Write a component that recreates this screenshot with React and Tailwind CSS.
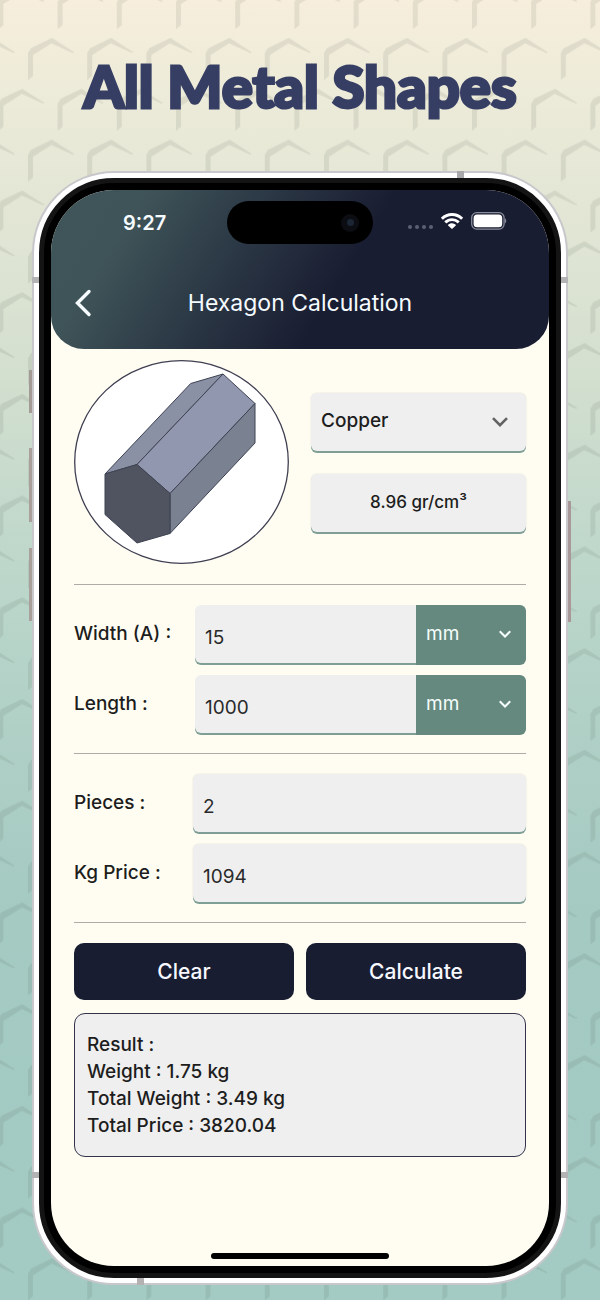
import React, { useState } from "react";

const DENSITIES = { Copper: 8.96, Aluminium: 2.7, Steel: 7.85, Brass: 8.73 };
const UNITS = ["mm", "cm", "inch"];

function HoneycombBackdrop() {
  return (
    <svg className="absolute inset-0 h-full w-full" aria-hidden="true">
      <defs>
        <g id="cell" fill="#3c4a40">
          <path d="M0 53 L0 80 L5 76 L5 55 L23 43.500 L24 38 L3 48 Z" fillOpacity="0.1" />
          <path d="M24 38 L46 52 L45 53 L23 43 Z" fillOpacity="0.1" />
        </g>
        <pattern id="comb" width="59.2" height="101.7" patternUnits="userSpaceOnUse" x="28" y="0">
          <use href="#cell" />
          <use href="#cell" x="29.6" y="50.8" />
          <use href="#cell" x="-29.6" y="50.8" />
          <use href="#cell" x="29.6" y="-50.900" />
          <use href="#cell" x="-29.6" y="-50.900" />
        </pattern>
      </defs>
      <rect width="100%" height="100%" fill="url(#comb)" />
    </svg>
  );
}

function Chevron({ className, strokeWidth }) {
  return (
    <svg viewBox="0 0 16 10" className={className} fill="none" stroke="currentColor" strokeWidth={strokeWidth} aria-hidden="true">
      <path d="M1 1.200 L8 8.200 L15 1.200" />
    </svg>
  );
}

function StatusIcons() {
  return (
    <div className="flex items-center justify-end pr-[42px]">
      <div className="mt-2 mr-2 flex gap-[3px]">
        {[0, 1, 2, 3].map((i) => (
          <span key={i} className="size-1 rounded-full bg-[#5b6074]" />
        ))}
      </div>
      <svg viewBox="0 0 22 16" className="mr-2 -mt-1 h-4 w-[22px]" fill="#fff" role="img" aria-label="Wi-Fi">
        <path d="M11 0C6.700 0 2.900 1.700.1 4.400a.4.400 0 0 0 0 .6l1.500 1.500c.2.200.4.200.6 0A12.600 12.600 0 0 1 11 3c3.400 0 6.500 1.300 8.800 3.500.2.200.4.200.6 0L21.900 5a.4.400 0 0 0 0-.6A15.700 15.700 0 0 0 11 0Z" />
        <path d="M11 5.200c-2.900 0-5.500 1.100-7.400 2.900-.2.200-.2.400 0 .6l1.500 1.500c.2.200.4.200.6 0A7.700 7.700 0 0 1 11 8.100c2 0 3.900.8 5.300 2.100.2.200.4.200.6 0l1.500-1.500c.2-.2.200-.4 0-.6A10.800 10.800 0 0 0 11 5.200Z" />
        <path d="M11 10.300c-1.500 0-2.900.6-3.900 1.500-.2.200-.2.400 0 .6l3.500 3.400c.2.200.5.200.7 0l3.500-3.400c.2-.2.200-.4 0-.6a5.700 5.700 0 0 0-3.800-1.500Z" />
      </svg>
      <svg viewBox="0 0 36 18" className="-mt-1 h-[18px] w-9" role="img" aria-label="Battery full">
        <rect x="0.7" y="0.7" width="32.400" height="16.400" rx="5" fill="none" stroke="#8a8d9b" strokeWidth="1.300" />
        <rect x="2.600" y="2.600" width="28.600" height="12.600" rx="3.500" fill="#fff" />
        <path d="M34 6.200 Q36.500 8.900 34 11.600 Z" fill="#8a8d9b" />
      </svg>
    </div>
  );
}

function HexagonBar() {
  return (
    <svg viewBox="0 0 215 204" className="w-full" role="img" aria-label="Hexagonal bar">
      <ellipse cx="107.500" cy="102" rx="106.800" ry="101.300" fill="#fff" stroke="#3f3f52" strokeWidth="1.300" />
      <g stroke="#3e4252" strokeWidth="1" strokeLinejoin="round">
        <path d="M31 114 L116.700 23.500 L149 14 L63 104.500 Z" fill="#8a91a5" />
        <path d="M63 104.500 L149 14 L181 43.500 L96 133.500 Z" fill="#9297b0" />
        <path d="M96 133.500 L181 43.500 L181 83 L96 173.500 Z" fill="#7a8191" />
        <path d="M31 114 L63 104.500 L96 133.500 L96 173.500 L63 183 L31 154.500 Z" fill="#4f5460" />
      </g>
    </svg>
  );
}

const fieldBox =
  "h-[58px] rounded-md bg-[#efefef] shadow-[0_2px_0_#7f9f96,0_0_2px_#0000001f]";

function MeasureRow({ id, label, value, onChange, unit, onUnit }) {
  return (
    <div className="flex items-center">
      <label htmlFor={id} className="w-[121px] shrink-0 text-[19px] font-medium">{label}</label>
      <input
        id={id}
        value={value}
        onChange={(e) => onChange(e.target.value)}
        inputMode="decimal"
        className="h-[58px] min-w-0 flex-1 rounded-l-md bg-[#efefef] px-[10px] pt-[6px] text-[19px] text-[#2a2a2a] shadow-[0_2px_0_#7f9f96] outline-none"
      />
      <div className="relative h-[58px] w-[110px] shrink-0 rounded-r-md bg-[#66897f] text-[#f4fdfa] shadow-[0_2px_0_#66897f]">
        <select
          aria-label={`${label} unit`}
          value={unit}
          onChange={(e) => onUnit(e.target.value)}
          className="h-full w-full appearance-none bg-transparent pl-[10px] text-[19px] outline-none"
        >
          {UNITS.map((u) => <option key={u}>{u}</option>)}
        </select>
        <Chevron className="pointer-events-none absolute top-1/2 right-[15px] w-3 -translate-y-1/2" strokeWidth={2.8} />
      </div>
    </div>
  );
}

function PlainRow({ id, label, value, onChange }) {
  return (
    <div className="flex items-center">
      <label htmlFor={id} className="w-[119px] shrink-0 text-[19px] font-medium">{label}</label>
      <input
        id={id}
        value={value}
        onChange={(e) => onChange(e.target.value)}
        inputMode="decimal"
        className={`${fieldBox} min-w-0 flex-1 px-[10px] pt-[6px] text-[19px] text-[#2a2a2a] outline-none`}
      />
    </div>
  );
}

function Divider() {
  return <hr className="my-5 border-t border-[#adaca6]" />;
}

export default function App() {
  const [material, setMaterial] = useState("Copper");
  const [width, setWidth] = useState("15");
  const [length, setLength] = useState("1000");
  const [widthUnit, setWidthUnit] = useState("mm");
  const [lengthUnit, setLengthUnit] = useState("mm");
  const [pieces, setPieces] = useState("2");
  const [price, setPrice] = useState("1094");
  const clear = () => [setWidth, setLength, setPieces, setPrice].forEach((set) => set(""));

  return (
    <main className="relative flex min-h-screen flex-col bg-[linear-gradient(180deg,#f7eedc_0%,#edebd9_7%,#e3e6d5_16%,#d3dfcf_29%,#bfd8cb_42%,#b0d0c6_56%,#a4cac2_70%,#a3cbc3_100%)] px-8 pb-[15px] font-['Inter',sans-serif] text-[#1d1d1d]">
      <HoneycombBackdrop />

      <h1 className="relative pt-[50px] pb-[49px] text-center font-['Lato',sans-serif] text-[58px] leading-[72px] font-black text-[#363e64] [-webkit-text-stroke:3px_#363e64]">
        All Metal Shapes
      </h1>

      <div className="relative flex flex-1 flex-col">
        <span className="absolute top-[199px] -left-[3px] h-[43px] w-1 bg-[#a59b96]" />
        <span className="absolute top-[277px] -left-[3px] h-[74px] w-1 bg-[#a9a09b]" />
        <span className="absolute top-[377px] -left-[3px] h-[73px] w-1 bg-[#a9a09b]" />
        <span className="absolute top-[330px] -right-[3px] h-[121px] w-1 bg-[#a8989a]" />

        <div className="relative flex flex-1 flex-col rounded-[82px] border-2 border-[#c8c7cb] bg-white p-[5px]">
          <span className="absolute -top-[2px] right-[102px] h-[7px] w-[7px] bg-[#a9a9ab]" />
          <span className="absolute top-[104px] -left-[2px] h-[6px] w-[7px] bg-[#b3b3b3]" />
          <span className="absolute top-[104px] -right-[2px] h-[6px] w-[7px] bg-[#b3b3b3]" />
          <span className="absolute bottom-[105px] -left-[2px] h-[6px] w-[7px] bg-[#b3b3b3]" />
          <span className="absolute right-[-2px] bottom-[105px] h-[6px] w-[7px] bg-[#b3b3b3]" />
          <span className="absolute -bottom-[2px] left-[103px] h-[7px] w-[7px] bg-[#b5b1b3]" />

          <div className="flex flex-1 flex-col rounded-[75px] border-[5px] border-[#141414] bg-black p-[7px]">
            <div className="flex flex-1 flex-col overflow-hidden rounded-[63px] bg-[#fffdf2]">
              <header className="flex h-[159px] flex-col rounded-b-[33px] bg-[linear-gradient(122deg,#405559_0%,#3f5458_16%,#2c3946_36%,#191d31_58%)] pt-[11px] text-[#f5fbff]">
                <div className="grid h-[43px] grid-cols-[1fr_146px_1fr]">
                  <time className="self-center pl-[72px] text-xl font-semibold">9:27</time>
                  <div className="flex items-center justify-end rounded-full bg-black pr-[14px]">
                    <span className="flex size-[18px] items-center justify-center rounded-full bg-[#0b0d12]">
                      <span className="size-[7px] rounded-full bg-[#1b2533]" />
                    </span>
                  </div>
                  <StatusIcons />
                </div>
                <div className="mt-[37px] grid grid-cols-[60px_1fr_60px] items-center">
                  <button type="button" aria-label="Back" className="flex h-11 items-center pl-[23px]">
                    <svg viewBox="0 0 18 28" className="h-7 w-[18px]" fill="none" stroke="currentColor" strokeWidth="3.400" strokeLinecap="round" strokeLinejoin="miter" aria-hidden="true">
                      <path d="M15 2.500 L3.500 14 L15 25.500" />
                    </svg>
                  </button>
                  <h2 className="text-center text-[23px] leading-8 font-normal">Hexagon Calculation</h2>
                </div>
              </header>

              <form className="flex flex-col px-[23px] pt-[11px]" onSubmit={(e) => e.preventDefault()}>
                <div className="grid grid-cols-2 items-center gap-[22px]">
                  <HexagonBar />
                  <div className="flex flex-col gap-[23px]">
                    <div className={`${fieldBox} relative`}>
                      <select
                        aria-label="Material"
                        value={material}
                        onChange={(e) => setMaterial(e.target.value)}
                        className="h-full w-full appearance-none bg-transparent pl-[10px] text-[19px] font-medium outline-none"
                      >
                        {Object.keys(DENSITIES).map((m) => <option key={m}>{m}</option>)}
                      </select>
                      <Chevron className="pointer-events-none absolute top-1/2 right-[18px] w-4 -translate-y-1/2 text-[#626262]" strokeWidth={2.6} />
                    </div>
                    <output className={`${fieldBox} flex items-center justify-center text-[17px] font-medium`}>
                      {DENSITIES[material]} gr/cm³
                    </output>
                  </div>
                </div>

                <Divider />
                <div className="flex flex-col gap-3">
                  <MeasureRow id="width" label="Width (A) :" value={width} onChange={setWidth} unit={widthUnit} onUnit={setWidthUnit} />
                  <MeasureRow id="length" label="Length :" value={length} onChange={setLength} unit={lengthUnit} onUnit={setLengthUnit} />
                </div>

                <Divider />
                <div className="flex flex-col gap-3">
                  <PlainRow id="pieces" label="Pieces :" value={pieces} onChange={setPieces} />
                  <PlainRow id="price" label="Kg Price :" value={price} onChange={setPrice} />
                </div>

                <Divider />
                <div className="grid grid-cols-2 gap-3 text-[21px] font-medium text-[#f7f8ff]">
                  <button type="button" onClick={clear} className="h-[57px] rounded-[10px] bg-[#191d31]">Clear</button>
                  <button type="submit" className="h-[57px] rounded-[10px] bg-[#191d31]">Calculate</button>
                </div>

                <section className="mt-[13px] rounded-[11px] border border-[#33344c] bg-[#efefef] px-3 pt-[17px] pb-[17px] text-[19px] leading-[27px] font-medium">
                  <p>Result :</p>
                  <p>Weight : 1.75 kg</p>
                  <p>Total Weight : 3.49 kg</p>
                  <p>Total Price : 3820.04</p>
                </section>
              </form>

              <div className="mx-auto mt-auto mb-[7px] h-[6px] w-[178px] rounded-full bg-black" />
            </div>
          </div>
        </div>
      </div>
    </main>
  );
}
